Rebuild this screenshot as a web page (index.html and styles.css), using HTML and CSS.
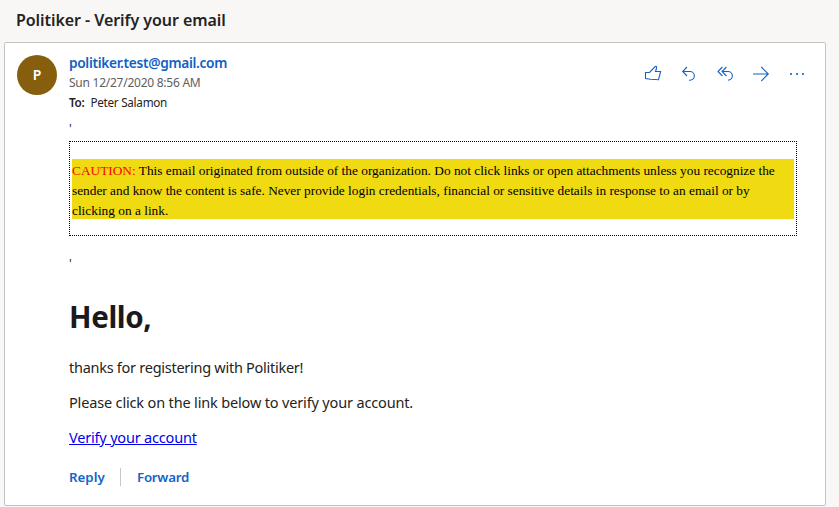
FILE: index.html
```html
<!DOCTYPE html>
<html lang="en">
<head>
<meta charset="utf-8">
<title>Politiker - Verify your email</title>
<link rel="stylesheet" href="styles.css">
</head>
<body>
<h2 class="subject"><span>Politiker - Verify your email</span></h2>
<main class="card">
  <header class="head">
    <div class="avatar">P</div>
    <div class="meta">
      <div class="sender"><span>politiker.test@gmail.com</span></div>
      <div class="date"><span>Sun 12/27/2020 8:56 AM</span></div>
      <div class="to"><b>To:</b><span>Peter Salamon</span></div>
    </div>
    <nav class="actions">
      <svg viewBox="0 0 20 20"><path d="M2.5 9.5H6.5L12.2 3.5Q14 3 13.6 5L12.5 8.5H17.6L15.5 16.7L7.5 16.3L2.5 15.5Z"/></svg>
      <svg viewBox="0 0 20 20"><path d="M8 4L3.7 8.5L8 13M4 8.5H11A4.3 4.3 0 0 1 11 17.2H10"/></svg>
      <svg viewBox="0 0 20 20"><path d="M7.4 4L3 8.5L7.4 13M11.4 4L7 8.5L11.4 13M7.5 8.5H13A4.3 4.3 0 0 1 13 17.2"/></svg>
      <svg viewBox="0 0 20 20"><path d="M2 11H17M10.3 4L17.3 11L10.3 18"/></svg>
      <svg viewBox="0 0 20 20" class="dots"><path d="M3 10h2v2H3zM9 10h2v2H9zM15 10h2v2h-2z"/></svg>
    </nav>
  </header>
  <section class="body">
    <div class="tick">'</div>
    <div class="notice"><p><span class="warn">CAUTION:</span> This email originated from outside of the organization. Do not click links or open attachments unless you recognize the<br>sender and know the content is safe. Never provide login credentials, financial or sensitive details in response to an email or by<br>clicking on a link.</p></div>
    <div class="tick second">'</div>
    <h1><span>Hello,</span></h1>
    <p class="line l1"><span>thanks for registering with Politiker!</span></p>
    <p class="line l2"><span>Please click on the link below to verify your account.</span></p>
    <p class="line l3"><a href="#">Verify your account</a></p>
  </section>
  <footer class="foot"><span class="reply">Reply</span><span class="forward">Forward</span></footer>
</main>
</body>
</html>
```
FILE: styles.css
```css
* { box-sizing: border-box; }
body { margin: 0; height: 507px; overflow: hidden; background: #f8f7f6; color: #242322; font-family: "Noto Sans", "Open Sans", sans-serif; }
.subject { margin: 0; height: 42px; padding: 8px 16px 0; font-size: 16px; line-height: 24px; font-weight: 600; white-space: nowrap; letter-spacing: -0.06px; }
.card { margin-left: 4px; width: 822px; height: 464px; background: #fff; border: 1px solid #c4c3c2; border-radius: 2px; }
.head { display: flex; height: 76px; padding: 12px 18px 0 12px; }
.avatar { width: 40px; height: 40px; border-radius: 50%; background: #875e0d; color: #fff; font-size: 14px; font-weight: 600; line-height: 40px; text-align: center; }
.meta { margin-left: 12px; flex: 1; }
.sender { height: 18px; font-size: 13.7px; line-height: 16px; font-weight: 600; color: #1160c3; letter-spacing: -0.32px; }
.date { height: 19px; font-size: 12px; line-height: 20px; color: #605e5c; letter-spacing: -0.25px; }
.to { display: flex; gap: 6px; height: 19px; font-size: 11.7px; line-height: 20px; letter-spacing: -0.27px; }
.to b { font-weight: 600; }
.actions { display: flex; gap: 16px; padding-top: 8px; }
.actions svg { width: 20px; height: 20px; fill: none; stroke: #1264c6; stroke-width: 1.1; }
.actions .dots path { fill: #3b83d1; stroke: none; }
.body { padding: 0 28px 0 64px; }
.tick { height: 22px; line-height: 20px; font-size: 12px; }
.notice { height: 95px; border: 1px dotted #000; padding: 17px 2px 0; font: 13.333px/20px "Liberation Serif", serif; color: #000; white-space: nowrap; }
.notice p { margin: 0; height: 60px; padding-top: 2px; background: #f0da12; }
.warn { color: #f00; }
.second { height: 60px; line-height: 56px; }
h1 { margin: 0; height: 42px; line-height: 41px; font-size: 29.5px; font-weight: 700; color: #1b1a19; letter-spacing: -0.4px; }
.line { margin: 0; height: 35px; line-height: 20px; font-size: 14.5px; white-space: nowrap; letter-spacing: -0.16px; }
.l1 { margin-top: 19px; letter-spacing: -0.27px; }
.l3 { letter-spacing: -0.19px; }
.line a { color: #00e; text-decoration: underline; }
.foot { display: flex; margin-top: 6px; padding-left: 64px; font-size: 13.3px; line-height: 18px; font-weight: 600; color: #1264c6; }
.reply { width: 52px; border-right: 1px solid #c8c6c4; }
.forward { margin-left: 16px; letter-spacing: -0.26px; }
```
